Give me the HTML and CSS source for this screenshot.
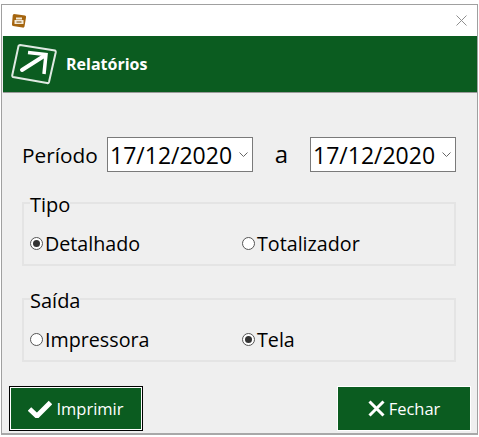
FILE: index.html
```html
<!DOCTYPE html>
<html lang="en">
<head>
    <meta charset="UTF-8">
    <meta name="viewport" content="width=device-width, initial-scale=1.0">
    <title>Relatórios</title>
    <link rel="stylesheet" href="styles.css">
</head>
<body>
    <div class="window">
        <div class="titlebar">
            <svg class="app-icon" width="16" height="16" viewBox="0 0 16 16">
                <path d="M3 1 L14 2.5 Q15.5 3 15 4.5 L13.5 13.5 Q13 15 11.5 14.5 L2 13 Q0.5 12.5 1 11 L1.7 2.5 Q2 1 3 1 Z" fill="#a5650f"/>
                <path d="M5 4.5 H11 V6.5 H5 Z M3.5 7 H12.5 V11 H3.5 Z" fill="#f3ead8"/>
                <path d="M5.5 9 H10.5" stroke="#7a4a0a" stroke-width="1"/>
            </svg>
            <svg class="close-icon" width="11" height="11" viewBox="0 0 11 11">
                <path d="M0.5 0.5 L10.5 10.5 M10.5 0.5 L0.5 10.5" stroke="#8f8f8f" stroke-width="1" fill="none"/>
            </svg>
        </div>
        <div class="header">
            <svg class="logo" width="46" height="42" viewBox="0 0 46 42">
                <path d="M9 2 L44 7.5 Q45 8 44.7 9.5 L38 39 Q37.5 40.5 36 40 L2 34 Q1 33.5 1.3 32 L7.5 3 Q8 2 9 2 Z" fill="none" stroke="#dfe9e2" stroke-width="2"/>
                <path d="M11 27 L33 13" stroke="#fff" stroke-width="4" stroke-linecap="round" fill="none"/>
                <path d="M17 9.5 L35 11.5 L33 31" stroke="#fff" stroke-width="3.5" fill="none"/>
            </svg>
            <span class="header-title">Relatórios</span>
        </div>
        <div class="content">
            <div class="period-row">
                <label class="period-label">Período</label>
                <div class="date-box">
                    <span>17/12/2020</span>
                    <svg class="chevron" width="9" height="5" viewBox="0 0 9 5"><path d="M0.5 0.5 L4.5 4.5 L8.5 0.5" stroke="#666" fill="none"/></svg>
                </div>
                <span class="period-sep">a</span>
                <div class="date-box">
                    <span>17/12/2020</span>
                    <svg class="chevron" width="9" height="5" viewBox="0 0 9 5"><path d="M0.5 0.5 L4.5 4.5 L8.5 0.5" stroke="#666" fill="none"/></svg>
                </div>
            </div>
            <fieldset class="group">
                <legend>Tipo</legend>
                <div class="radio-row">
                    <div class="radio-item"><span class="radio checked"></span>Detalhado</div>
                    <div class="radio-item"><span class="radio"></span>Totalizador</div>
                </div>
            </fieldset>
            <fieldset class="group">
                <legend>Saída</legend>
                <div class="radio-row">
                    <div class="radio-item"><span class="radio"></span>Impressora</div>
                    <div class="radio-item"><span class="radio checked"></span>Tela</div>
                </div>
            </fieldset>
            <div class="buttons">
                <button class="button default">
                    <svg width="24" height="18" viewBox="0 0 24 18"><path d="M1.5 9 L9 16 L22.5 2.5" stroke="#fff" stroke-width="5" fill="none"/></svg>
                    Imprimir
                </button>
                <button class="button">
                    <svg width="17" height="17" viewBox="0 0 17 17"><path d="M1.5 1.5 L15.5 15.5 M15.5 1.5 L1.5 15.5" stroke="#fff" stroke-width="3" fill="none"/></svg>
                    Fechar
                </button>
            </div>
        </div>
    </div>
</body>
</html>
```

FILE: styles.css
```css
html, body {
    height: 100%;
}
body {
    margin: 0;
    padding: 4px 0 2px 1px;
    box-sizing: border-box;
    background: #ffffff;
    font-family: 'Open Sans', 'Noto Sans', sans-serif;
    color: #000000;
    overflow: hidden;
}
.window {
    width: 477px;
    height: 431px;
    box-sizing: border-box;
    border: 1px solid #a0a0a0;
    border-bottom: 2px solid #a8a8a8;
    background: #efefef;
    display: flex;
    flex-direction: column;
}
.titlebar {
    height: 31px;
    flex: none;
    background: #ffffff;
    display: flex;
    align-items: center;
    justify-content: space-between;
    padding: 0 10px 0 9px;
}
.header {
    height: 57px;
    flex: none;
    box-sizing: border-box;
    margin: 0 0 0 1px;
    background: #0b5c20;
    border-bottom: 1px solid #9a9a9a;
    display: flex;
    align-items: center;
    gap: 9px;
    padding: 0 0 1px 8px;
}
.header-title {
    color: #ffffff;
    font-size: 16px;
    font-weight: 700;
}
.content {
    flex: 1;
    display: flex;
    flex-direction: column;
    padding: 44px 21px 0 20px;
}
.period-row {
    display: flex;
    align-items: center;
    height: 35px;
    margin-bottom: -2px;
    font-size: 20.8px;
}
.period-label {
    width: 85px;
}
.period-sep {
    width: 57px;
    text-align: center;
    font-size: 24px;
    padding-bottom: 2px;
}
.date-box {
    width: 146px;
    height: 35px;
    box-sizing: border-box;
    border: 1px solid #7a7a7a;
    background: #ffffff;
    display: flex;
    align-items: center;
    justify-content: space-between;
    padding: 0 4px 0 2px;
    font-size: 23px;
}
.group {
    margin: 20px 0 0 0;
    padding: 0 6px;
    border: 2px solid #e4e4e4;
    height: 72px;
    min-width: 0;
}
.group legend {
    padding: 4px 0 0 0;
    font-size: 20px;
    line-height: 21px;
}
.radio-row {
    display: flex;
    font-size: 19.7px;
    padding-top: 15px;
}
.radio-item {
    flex: none;
    width: 212px;
    display: flex;
    align-items: center;
    gap: 2px;
}
.radio {
    width: 13px;
    height: 13px;
    box-sizing: border-box;
    border: 1px solid #555555;
    border-radius: 50%;
    background: #ffffff;
    display: flex;
    align-items: center;
    justify-content: center;
}
.radio.checked::after {
    content: "";
    width: 7px;
    height: 7px;
    border-radius: 50%;
    background: #333333;
}
.buttons {
    display: flex;
    justify-content: space-between;
    margin: auto -15px 2px -13px;
}
.button {
    width: 134px;
    height: 45px;
    box-sizing: border-box;
    background: #0b5c20;
    color: #ffffff;
    border: 1px solid #ffffff;
    font-family: inherit;
    font-size: 16.5px;
    display: flex;
    align-items: center;
    justify-content: center;
    gap: 4px;
    padding: 0;
}
.button.default {
    border: 1px solid #000000;
    box-shadow: inset 0 0 0 1px #ffffff;
}
```
